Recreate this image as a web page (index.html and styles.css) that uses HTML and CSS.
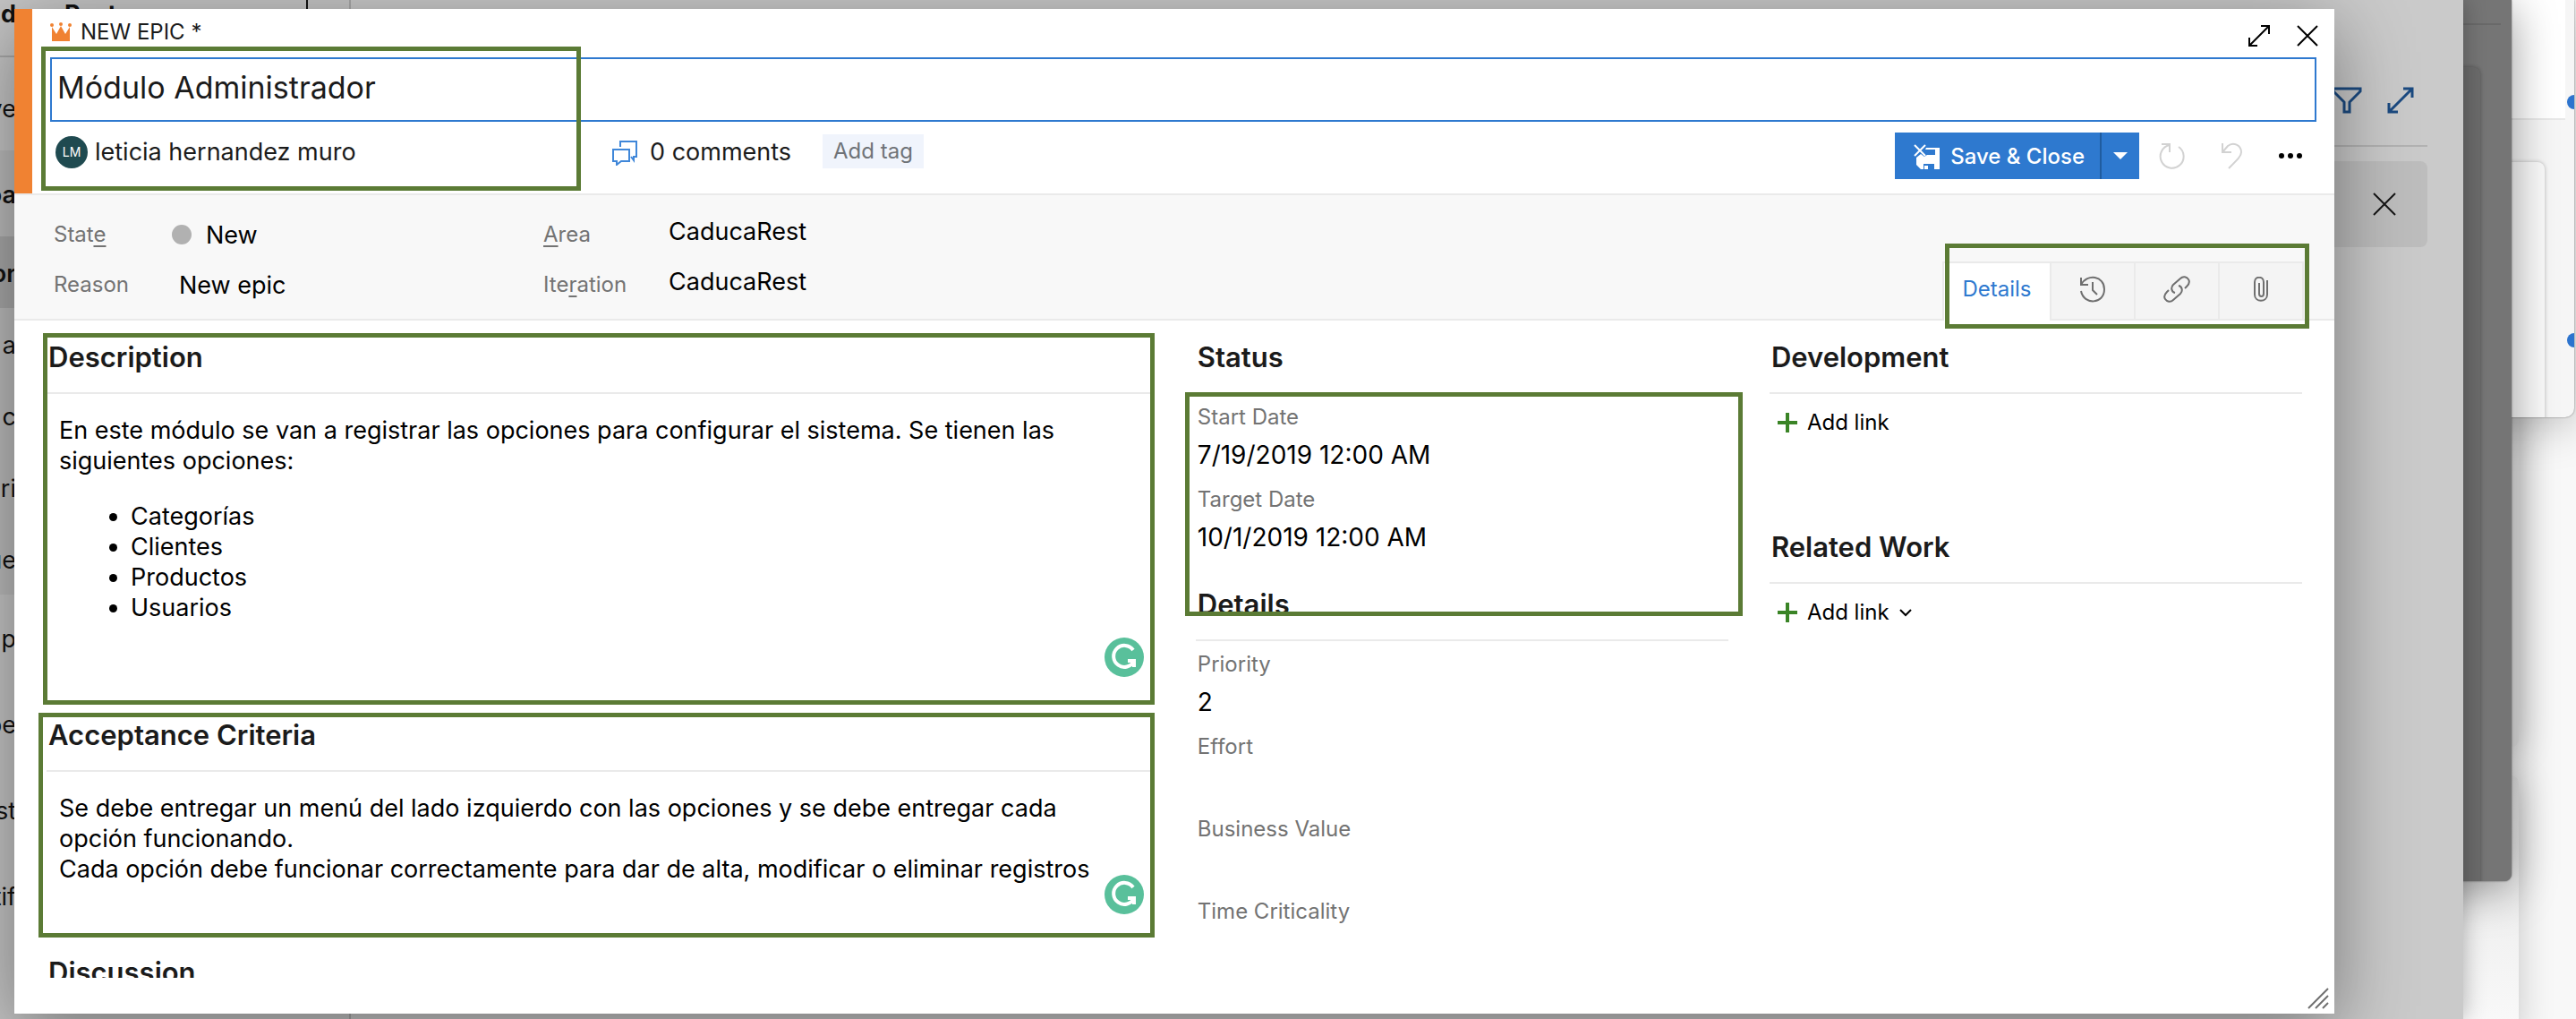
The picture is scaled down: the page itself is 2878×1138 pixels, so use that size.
FILE: index.html
```html
<!DOCTYPE html>
<html lang="es">
<head>
<meta charset="utf-8">
<meta name="viewport" content="width=device-width, initial-scale=1">
<title>New Epic - Módulo Administrador</title>
<link rel="stylesheet" href="styles.css">
</head>
<body>
<div class="desktop">
  <div class="sheet sheet-upper"></div>
  <div class="sheet sheet-lower"></div>
  <div class="window window-light">
    <div class="light-top"></div>
    <div class="light-card"></div>
    <span class="knob knob-a"></span>
    <span class="knob knob-b"></span>
  </div>
  <div class="window window-dark"><div class="dark-line"></div><div class="dark-card"></div></div>

  <div class="window window-board">
    <nav class="sidebar">
      <div class="side-head"><span class="side-text">nd</span><span>Rest</span></div>
      <div class="side-row first"><span class="side-text">ve</span></div>
      <div class="side-row strong shade"><span class="side-text">oa</span></div>
      <div class="side-row strong short current"><span class="side-text">or</span></div>
      <div class="side-row short shade"><span class="side-text">a</span></div>
      <div class="side-row short shade"><span class="side-text">c</span></div>
      <div class="side-row short shade"><span class="side-text">ri</span></div>
      <div class="side-row short shade"><span class="side-text">ue</span></div>
      <div class="side-row"><span class="side-text">p</span></div>
      <div class="side-row"><span class="side-text">be</span></div>
      <div class="side-row"><span class="side-text">st</span></div>
      <div class="side-row"><span class="side-text">tif</span></div>
    </nav>
    <div class="board">
      <div class="board-tools">
        <button class="tool" aria-label="Filter"><svg width="34" height="30" viewBox="0 0 34 30"><path d="M2 2H32V5L20 17V28H14V17L2 5Z"/></svg></button>
        <button class="tool" aria-label="Full screen"><svg width="30" height="30" viewBox="0 0 30 30"><path d="M2 28L28 2M18 2H28V12M2 18V28H12"/></svg></button>
      </div>
      <div class="banner">
        <button class="tool dark" aria-label="Dismiss"><svg width="26" height="26" viewBox="0 0 26 26"><path d="M1 1L25 25M25 1L1 25"/></svg></button>
      </div>
    </div>
  </div>

  <main class="dialog" role="dialog" aria-label="New epic">
    <header class="head">
      <div class="head-top">
        <div class="kind">
          <svg class="crown" width="24" height="22" viewBox="0 0 24 22"><path d="M2 21V5L7 13L12 4L17 13L22 5V21Z"/><circle cx="2" cy="3" r="2"/><circle cx="12" cy="2" r="2"/><circle cx="22" cy="3" r="2"/></svg>
          <span>NEW EPIC *</span>
        </div>
        <div class="win-buttons">
          <button aria-label="Maximize"><svg width="26" height="26" viewBox="0 0 26 26"><path d="M2 24L24 2M15 2H24V11M2 15V24H11"/></svg></button>
          <button aria-label="Close"><svg width="24" height="24" viewBox="0 0 24 24"><path d="M1 1L23 23M23 1L1 23"/></svg></button>
        </div>
      </div>
      <input class="title" aria-label="Title" value="Módulo Administrador">
      <div class="head-row">
        <div class="person"><span class="avatar">LM</span><span>leticia hernandez muro</span></div>
        <a class="comments" href="#discussion">
          <svg width="30" height="30" viewBox="0 0 30 30"><path d="M10 9V3H28V20H25V24L22 20M2 12H20V25H11L6 29V25H2Z"/></svg>
          <span>0 comments</span>
        </a>
        <button class="add-tag">Add tag</button>
        <div class="actions">
          <button class="save">
            <svg width="30" height="30" viewBox="0 0 30 30"><path class="fill" d="M15 5H30V29H24V23H12V29H9L4 24V16L9 12L13 15L16 13H25V7H14Z"/><path class="fill" d="M13 25H17V29H13Z"/><path class="line" d="M2 2L14 14M14 2L2 14"/></svg>
            <span>Save &amp; Close</span>
          </button>
          <button class="save-more" aria-label="More save options"><svg width="16" height="8" viewBox="0 0 16 8"><path class="fill" d="M0 0H16L8 8Z"/></svg></button>
          <button class="icon faint" aria-label="Refresh"><svg width="30" height="30" viewBox="0 0 30 30"><path d="M3 2H12V11M12 3A13 13 0 1 0 22 5"/></svg></button>
          <button class="icon faint" aria-label="Undo"><svg width="24" height="30" viewBox="0 0 24 30"><path d="M2 1V11H12M2 11L8 4C14 -1 23 3 23 11C23 15 20 18 9 29"/></svg></button>
          <button class="icon" aria-label="More actions"><svg width="26" height="6" viewBox="0 0 26 6"><circle cx="3" cy="3" r="3"/><circle cx="13" cy="3" r="3"/><circle cx="23" cy="3" r="3"/></svg></button>
        </div>
      </div>
      <span class="mark mark-title"></span>
    </header>

    <section class="info">
      <div class="pairs">
        <label for="state">Stat<u>e</u></label>
        <div class="value"><span class="dot"></span><input id="state" value="New"></div>
        <label for="reason">Reason</label>
        <div class="value inset"><input id="reason" value="New epic"></div>
      </div>
      <div class="pairs paths">
        <label for="area"><u>A</u>rea</label>
        <div class="value"><input id="area" value="CaducaRest"></div>
        <label for="iteration">Ite<u>r</u>ation</label>
        <div class="value"><input id="iteration" value="CaducaRest"></div>
      </div>
      <div class="tabs" role="tablist">
        <button class="tab active" role="tab" aria-selected="true">Details</button>
        <button class="tab" role="tab" aria-label="History"><svg width="30" height="30" viewBox="0 0 30 30"><path d="M2 2V10H10M2 10C9 -3 28 0 28 15C28 32 5 33 2 17M15 7V16L20 21"/></svg></button>
        <button class="tab" role="tab" aria-label="Links"><svg width="30" height="30" viewBox="0 0 30 30"><path d="M13 19C9 18 8 13 11 10L19 3C22 0 26 1 28 4C30 7 28 10 26 12L24 14M17 11C21 12 22 17 19 20L11 27C8 30 4 29 2 26C0 23 2 20 4 18L6 16"/></svg></button>
        <button class="tab" role="tab" aria-label="Attachments"><svg width="16" height="28" viewBox="0 0 16 28"><path d="M15 4V20C15 29 1 29 1 20V6C1 -1 11 -1 11 6V19C11 23 6 23 6 19V7"/></svg></button>
        <span class="mark mark-tabs"></span>
      </div>
    </section>

    <div class="content">
      <div class="column">
        <section class="group">
          <h2>Description</h2>
          <div class="editor tall">
            <p>En este módulo se van a registrar las opciones para configurar el sistema. Se tienen las siguientes opciones:</p>
            <ul><li>Categorías</li><li>Clientes</li><li>Productos</li><li>Usuarios</li></ul>
            <svg class="checker" width="44" height="44" viewBox="0 0 44 44"><circle cx="22" cy="22" r="22"/><path d="M32 14A12 12 0 1 0 33 26M26 26H33V33"/></svg>
          </div>
          <span class="mark mark-description"></span>
        </section>
        <section class="group">
          <h2>Acceptance Criteria</h2>
          <div class="editor">
            <p>Se debe entregar un menú del lado izquierdo con las opciones y se debe entregar cada opción funcionando.<br>Cada opción debe funcionar correctamente para dar de alta, modificar o eliminar registros</p>
            <svg class="checker" width="44" height="44" viewBox="0 0 44 44"><circle cx="22" cy="22" r="22"/><path d="M32 14A12 12 0 1 0 33 26M26 26H33V33"/></svg>
          </div>
          <span class="mark mark-criteria"></span>
        </section>
        <section class="group" id="discussion">
          <h2>Discussion</h2>
        </section>
      </div>

      <div class="column">
        <section class="group">
          <h2>Status</h2>
          <div class="fields">
            <div class="field"><label for="start">Start Date</label><input id="start" value="7/19/2019 12:00 AM"></div>
            <div class="field"><label for="target">Target Date</label><input id="target" value="10/1/2019 12:00 AM"></div>
          </div>
          <span class="mark mark-status"></span>
        </section>
        <section class="group">
          <h2>Details</h2>
          <div class="fields">
            <div class="field"><label for="priority">Priority</label><input id="priority" value="2"></div>
            <div class="field"><label for="effort">Effort</label><input id="effort"></div>
            <div class="field"><label for="business">Business Value</label><input id="business"></div>
            <div class="field"><label for="time">Time Criticality</label><input id="time"></div>
          </div>
        </section>
      </div>

      <div class="column">
        <section class="group links">
          <h2>Development</h2>
          <button class="add-link"><svg width="22" height="22" viewBox="0 0 22 22"><path class="plus" d="M11 0V22M0 11H22"/></svg><span>Add link</span></button>
        </section>
        <section class="group links">
          <h2>Related Work</h2>
          <button class="add-link"><svg width="22" height="22" viewBox="0 0 22 22"><path class="plus" d="M11 0V22M0 11H22"/></svg><span>Add link</span><svg width="14" height="10" viewBox="0 0 14 10"><path class="chevron" d="M1 2L7 8L13 2"/></svg></button>
        </section>
      </div>
    </div>
    <svg class="grip" width="24" height="24" viewBox="0 0 24 24"><path d="M1 23L23 1M9 23L23 9M17 23L23 17"/></svg>
  </main>
</div>
</body>
</html>
```
FILE: styles.css
```css
* { box-sizing: border-box; }

body {
  margin: 0;
  font-family: Inter, "Liberation Sans", sans-serif;
  font-size: 27px;
  line-height: 34px;
  color: #000;
}

button, input {
  margin: 0;
  padding: 0;
  border: 0;
  background: none;
  font: inherit;
  color: inherit;
}

button {
  display: flex;
  align-items: center;
  justify-content: center;
}

svg {
  display: block;
  flex: none;
  fill: none;
  stroke: #000;
  stroke-width: 2;
}

/* Stacked windows behind the dialog */
.desktop {
  position: relative;
  min-height: 100vh;
  overflow: hidden;
  background: #f8f8f8;
}

.window, .sheet { position: absolute; overflow: hidden; }

.sheet {
  right: 64px;
  width: 300px;
  border-radius: 8px;
  background: linear-gradient(#e4e4e4, #f9f9f9 280px);
  box-shadow: 0 4px 40px rgba(0, 0, 0, 0.2);
}

.sheet-upper { top: 0; height: 834px; background: #e2e2e2; }
.sheet-lower { top: 866px; bottom: -20px; }

.window-light {
  top: 0;
  right: 2px;
  width: 400px;
  height: 466px;
  border-radius: 0 0 10px 10px;
  background: #f6f6f6;
  box-shadow: 0 8px 50px rgba(0, 0, 0, 0.25), 0 0 2px rgba(0, 0, 0, 0.5);
}

.light-top { height: 134px; margin-right: 10px; background: #fff; border-bottom: 2px solid #e8e8e8; }
.light-card {
  height: 320px;
  margin: 47px 33px 0 0;
  border-radius: 8px;
  background: #fafafa;
  box-shadow: 0 0 4px rgba(0, 0, 0, 0.25);
}

.knob {
  position: absolute;
  right: -8px;
  width: 16px;
  height: 16px;
  border-radius: 50%;
  background: #2d74ce;
}
.knob-a { top: 106px; }
.knob-b { top: 372px; }

.window-dark {
  top: 0;
  right: 72px;
  width: 400px;
  height: 984px;
  border-radius: 0 0 8px 8px;
  background: #757575;
  box-shadow: 0 10px 50px rgba(0, 0, 0, 0.4), 0 0 2px rgba(0, 0, 0, 0.6);
}
.dark-line { height: 28px; margin-right: 12px; border-bottom: 2px solid #696969; }
.dark-card {
  height: 960px;
  margin: 47px 35px 0 0;
  border-radius: 8px;
  background: #6b6b6b;
  box-shadow: 0 0 4px rgba(0, 0, 0, 0.3);
}

.window-board {
  inset: 0 126px 0 0;
  display: flex;
  overflow: visible;
  background: #cacaca;
  box-shadow: 0 0 24px rgba(0, 0, 0, 0.3);
}

.sidebar {
  flex: none;
  width: 392px;
  border-right: 2px solid #a8a8a8;
  background: #c6c6c6;
  color: #121212;
}

.side-head {
  display: flex;
  align-items: flex-start;
  gap: 54px;
  width: 344px;
  height: 64px;
  border-right: 2px solid #121212;
  border-bottom: 2px solid #a8a8a8;
  font-weight: 700;
  line-height: 32px;
}

.side-row { display: flex; align-items: center; height: 96px; padding-top: 4px; }
.side-row.first { height: 104px; padding-top: 12px; }
.side-row.short { height: 80px; }
.side-row.shade { background: #bcbcbc; }
.side-row.current { background: #a9a9a9; }
.side-row.strong { font-weight: 600; }
.side-text { display: flex; justify-content: flex-end; width: 18px; }

.board { flex: 1; padding-right: 40px; }
.board-tools {
  display: flex;
  justify-content: flex-end;
  height: 164px;
  padding-top: 82px;
  border-bottom: 2px solid #b2b2b2;
}
.tool { width: 60px; height: 60px; }
.tool svg { stroke: #1b4a80; stroke-width: 3; }
.tool.dark svg { stroke: #151515; stroke-width: 2; }
.banner {
  display: flex;
  align-items: center;
  justify-content: flex-end;
  height: 96px;
  margin-top: 16px;
  padding-right: 18px;
  border-radius: 8px;
  background: #bdbdbd;
}

/* Dialog */
.dialog {
  position: absolute;
  inset: 10px 270px 6px 16px;
  display: flex;
  flex-direction: column;
  padding-bottom: 40px;
  background: #fff;
  box-shadow: 0 20px 80px rgba(0, 0, 0, 0.42);
}

.mark {
  position: absolute;
  z-index: 2;
  border: 5px solid #5b7b35;
  pointer-events: none;
}
.mark-title { left: 10px; top: 42px; width: 603px; height: 161px; }
.mark-tabs { inset: -20px -6px -9px 3px; }
.mark-description { inset: 14px 0 -7px -4px; }
.mark-criteria { inset: 16px 0 -2px -9px; }
.mark-status { inset: 80px -16px -54px -12px; }

.head {
  position: relative;
  border-left: 20px solid #f08232;
  color: #1b1b1b;
}

.head-top {
  display: flex;
  justify-content: space-between;
  height: 54px;
  padding: 0 3px 0 20px;
  font-size: 24px;
}
.kind { display: flex; align-items: center; gap: 10px; height: 52px; }
.crown { fill: #f08232; stroke: none; }
.win-buttons { display: flex; align-self: flex-end; }
.win-buttons button { width: 54px; height: 48px; }

.title {
  display: block;
  width: calc(100% - 40px);
  height: 72px;
  margin: 0 20px;
  padding: 0 6px 5px;
  border: 2px solid #2e79cf;
  font-size: 34px;
  outline: 0;
}

.head-row {
  display: flex;
  align-items: flex-start;
  height: 80px;
  padding: 0 16px 0 26px;
}
.person, .comments { display: flex; align-items: center; height: 68px; }
.person { gap: 8px; width: 621px; }
.avatar {
  width: 36px;
  height: 36px;
  border-radius: 50%;
  background: #1f4a50;
  color: #fff;
  font-size: 14px;
  line-height: 36px;
  text-align: center;
}
.comments { gap: 13px; color: inherit; text-decoration: none; }
.comments svg { stroke: #3f87d9; }
.add-tag {
  height: 38px;
  margin: 14px 0 0 35px;
  padding: 0 12px;
  background: #f0f4fc;
  color: #6f7378;
  font-size: 24px;
}

.actions { display: flex; margin: 12px 0 0 auto; }
.save, .save-more { height: 52px; background: #2e79cf; color: #fff; }
.save { gap: 12px; padding: 2px 17px 0 20px; font-size: 24px; font-weight: 500; }
.save-more { width: 44px; margin-right: 4px; border-left: 2px solid #205c9f; }
.save .fill, .save-more .fill { fill: #fff; stroke: none; }
.save .line { stroke: #fff; stroke-width: 2; }
.icon { width: 66px; height: 52px; }
.icon svg { fill: #000; stroke: none; }
.icon.faint svg { fill: none; stroke: #d2d2d2; }

.info {
  display: flex;
  height: 142px;
  padding: 16px 34px 0 44px;
  border-top: 2px solid #eaeaea;
  border-bottom: 2px solid #eaeaea;
  background: #f8f8f8;
}
.pairs {
  display: grid;
  grid-template-columns: 132px 1fr;
  grid-template-rows: 56px 56px;
  align-items: center;
  width: 547px;
}
.paths { grid-template-columns: 140px 1fr; }
.pairs label, .field label { color: #737373; font-size: 24px; }
.pairs u { text-underline-offset: 4px; }
.value { display: flex; align-items: center; gap: 16px; }
.value input { width: 100%; height: 44px; }
.paths input { height: 48px; padding-bottom: 8px; }
.inset { padding-left: 8px; }
.dot { flex: none; width: 22px; height: 22px; border-radius: 50%; background: #b1b1b1; }

.tabs { position: relative; display: flex; align-self: flex-end; height: 66px; margin: 0 0 -2px auto; }
.tab {
  width: 94px;
  padding-bottom: 5px;
  border: 2px solid #eaeaea;
  border-right: 0;
  background: #f4f4f4;
  font-size: 24px;
}
.tab:nth-of-type(4) { width: 96px; border-right: 2px solid #eaeaea; }
.tab.active { width: 120px; padding-bottom: 7px; border-bottom: 0; background: #fff; color: #2e79cf; }
.tab svg { stroke: #6f6f6f; }

.content {
  flex: 1;
  display: grid;
  grid-template-columns: 208fr 100fr 100fr;
  gap: 46px;
  min-height: 0;
  padding: 0 36px;
  overflow: hidden;
}
.group { position: relative; }
.group h2 {
  margin: 0;
  padding: 21px 2px 19px;
  border-bottom: 2px solid #eaeaea;
  color: #1b1b1b;
  font-size: 31px;
  font-weight: 600;
  line-height: 40px;
}
.editor { position: relative; min-height: 183px; padding: 24px 40px 20px 14px; }
.editor.tall { min-height: 340px; }
.editor p { margin: 0; }
.editor ul { margin: 28px 0 0; padding-left: 80px; }
.checker { position: absolute; right: 12px; bottom: 24px; }
.checker circle { fill: #59c09b; stroke: none; }
.checker path { stroke: #fff; stroke-width: 4; }

.fields { padding: 10px 2px 0; }
.field { display: flex; flex-direction: column; height: 92px; }
.field label { line-height: 32px; }
.field input { width: 100%; height: 52px; font-size: 28px; }

.links { min-height: 212px; }
.add-link { height: 64px; padding-left: 9px; gap: 11px; font-size: 24px; }
.plus { stroke: #3a8426; stroke-width: 4; }

.grip { position: absolute; right: 6px; bottom: 5px; stroke: #707070; }
```
